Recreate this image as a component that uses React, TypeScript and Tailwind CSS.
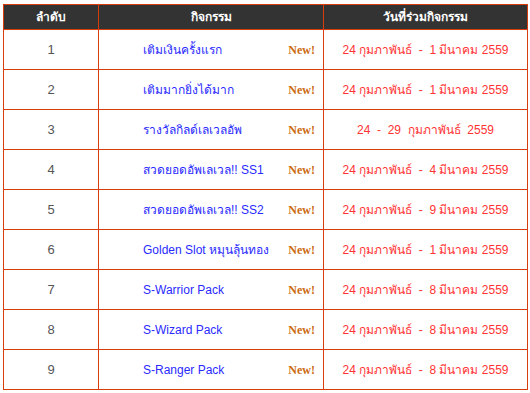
import React from 'react';

const rows = [
  { no: 1, name: 'เติมเงินครั้งแรก', date: '24 กุมภาพันธ์  -  1 มีนาคม 2559' },
  { no: 2, name: 'เติมมากยิ่งได้มาก', date: '24 กุมภาพันธ์  -  1 มีนาคม 2559' },
  { no: 3, name: 'รางวัลกิลด์เลเวลอัพ', date: '24  -  29  กุมภาพันธ์  2559' },
  { no: 4, name: 'สวดยอดอัพเลเวล!! SS1', date: '24 กุมภาพันธ์  -  4 มีนาคม 2559' },
  { no: 5, name: 'สวดยอดอัพเลเวล!! SS2', date: '24 กุมภาพันธ์  -  9 มีนาคม 2559' },
  { no: 6, name: 'Golden Slot หมุนลุ้นทอง', date: '24 กุมภาพันธ์  -  1 มีนาคม 2559' },
  { no: 7, name: 'S-Warrior Pack', date: '24 กุมภาพันธ์  -  8 มีนาคม 2559' },
  { no: 8, name: 'S-Wizard Pack', date: '24 กุมภาพันธ์  -  8 มีนาคม 2559' },
  { no: 9, name: 'S-Ranger Pack', date: '24 กุมภาพันธ์  -  8 มีนาคม 2559' },
];

const App = () => {
  return (
    <div className="w-[530px] h-[393px] bg-white pt-[4px] pl-[3px] font-['Liberation_Sans','Noto_Sans',sans-serif]">
      {/* grid lines come from the orange backdrop showing through the gaps */}
      <div className="w-[525px] bg-[#d63d08] p-px grid grid-cols-[94px_224px_203px] auto-rows-[39px] grid-rows-[24px] gap-px">
        <div className="bg-[#333333] text-white text-[12px] font-bold flex items-center justify-center">ลำดับ</div>
        <div className="bg-[#333333] text-white text-[12px] font-bold flex items-center justify-center">กิจกรรม</div>
        <div className="bg-[#333333] text-white text-[12px] font-bold flex items-center justify-center">วันที่ร่วมกิจกรรม</div>
        {rows.map((r) => (
          <React.Fragment key={r.no}>
            <div className="bg-white flex items-center justify-center text-[13px] text-[#555555]">{r.no}</div>
            <div className="bg-white flex items-center justify-between pl-[44px] pr-[8px]">
              <span className="text-[12px] text-[#2a2aff]">{r.name}</span>
              <span className="text-[12px] font-bold text-[#cc6a10] font-['Liberation_Serif',serif]">New!</span>
            </div>
            <div className="bg-white flex items-center justify-center text-[12px] text-[#ff3333] whitespace-pre">{r.date}</div>
          </React.Fragment>
        ))}
      </div>
    </div>
  );
};

export default App;
